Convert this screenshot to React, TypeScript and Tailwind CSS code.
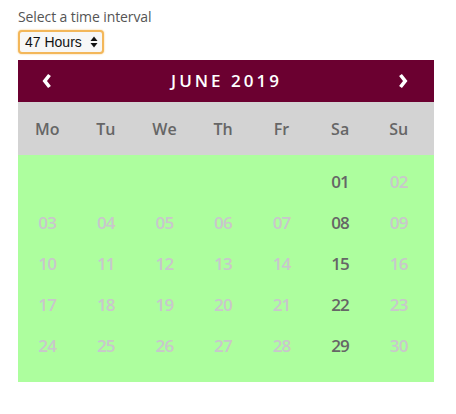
import React from "react";

const days: { d: string; active?: boolean }[][] = [
  [{ d: "" }, { d: "" }, { d: "" }, { d: "" }, { d: "" }, { d: "01", active: true }, { d: "02" }],
  [{ d: "03" }, { d: "04" }, { d: "05" }, { d: "06" }, { d: "07" }, { d: "08", active: true }, { d: "09" }],
  [{ d: "10" }, { d: "11" }, { d: "12" }, { d: "13" }, { d: "14" }, { d: "15", active: true }, { d: "16" }],
  [{ d: "17" }, { d: "18" }, { d: "19" }, { d: "20" }, { d: "21" }, { d: "22", active: true }, { d: "23" }],
  [{ d: "24" }, { d: "25" }, { d: "26" }, { d: "27" }, { d: "28" }, { d: "29", active: true }, { d: "30" }],
];

const weekdays = ["Mo", "Tu", "We", "Th", "Fr", "Sa", "Su"];

export default function App() {
  return (
    <div
      className="w-[456px] h-[414px] bg-white pl-[18px] pt-[8px]"
      style={{ fontFamily: '"Open Sans", "Noto Sans", sans-serif' }}
    >
      <div className="text-[14px] leading-[18px] text-[#555] tracking-[-0.1px]">Select a time interval</div>
      <div className="mt-[4px] flex">
        <div
          className="h-[24px] w-[86px] rounded-[4px] border-2 border-[#f3b75a] bg-[#f7f7f7] flex items-center pl-[5px] pr-[4px] text-[14px] text-[#111] shadow-[0_0_2px_#f6c77a]"
          style={{ fontFamily: '"Liberation Sans", Arial, sans-serif' }}
        >
          <span>47 Hours</span>
          <svg width="8" height="12" viewBox="0 0 8 12" className="ml-auto">
            <path d="M4 0.5 L7.5 5 H0.5 Z" fill="#111" />
            <path d="M4 11.5 L7.5 7 H0.5 Z" fill="#111" />
          </svg>
        </div>
      </div>
      <div className="mt-[6px] w-[416px]">
        <div className="h-[42px] bg-[#6b0030] flex items-center justify-between pl-[23px] pr-[25px] text-white">
          <svg width="12" height="16" viewBox="0 0 12 16">
            <path d="M8.5 2 L3.8 8 L8.5 14" stroke="white" strokeWidth="3.6" fill="none" strokeLinejoin="miter" />
          </svg>
          <span className="text-[17px] font-semibold tracking-[3px] pl-[3px]">JUNE 2019</span>
          <svg width="12" height="16" viewBox="0 0 12 16">
            <path d="M3.5 2 L8.2 8 L3.5 14" stroke="white" strokeWidth="3.6" fill="none" strokeLinejoin="miter" />
          </svg>
        </div>
        <div className="h-[53px] bg-[#d3d3d3]">
          <div className="w-[410px] h-full grid grid-cols-7 items-center">
            {weekdays.map((w) => (
              <div key={w} className="text-center text-[16px] font-[560] text-[#666]">
                {w}
              </div>
            ))}
          </div>
        </div>
        <div className="bg-[#adfe9e] pt-[6px] pb-[16px]">
          {days.map((row, i) => (
            <div key={i} className="w-[410px] grid grid-cols-7 h-[41px] items-center">
              {row.map((c, j) => (
                <div
                  key={j}
                  className={
                    "text-center text-[17px] tracking-[-0.8px] font-semibold " +
                    (c.active ? "text-[#666]" : "text-[#c9c6cc]")
                  }
                >
                  {c.d}
                </div>
              ))}
            </div>
          ))}
        </div>
      </div>
    </div>
  );
}
